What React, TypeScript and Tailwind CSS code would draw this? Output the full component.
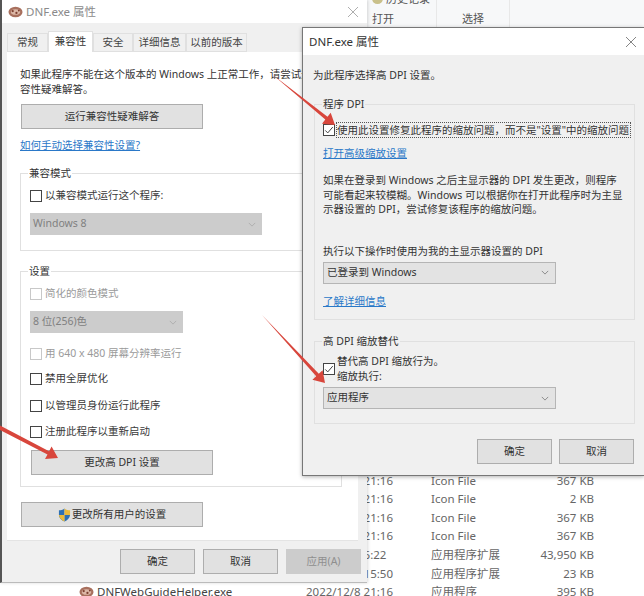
import type { ReactNode } from 'react'

const FONT = "font-['Noto_Sans','Noto_Sans_CJK_SC',sans-serif]"

const fileRows = [
  { date: '2022/12/8 21:16', type: 'Icon File', size: '367 KB' },
  { date: '2022/12/8 21:16', type: 'Icon File', size: '2 KB' },
  { date: '2022/12/8 21:16', type: 'Icon File', size: '367 KB' },
  { date: '2022/12/8 21:16', type: 'Icon File', size: '367 KB' },
  { date: '2022/12/8 6:22', type: '应用程序扩展', size: '43,950 KB' },
  { date: '2022/12/8 15:50', type: '应用程序扩展', size: '23 KB' },
  { date: '2022/12/8 21:16', type: '应用程序', size: '395 KB', name: 'DNFWebGuideHelper.exe' },
]

function Btn({ className, children }: { className: string; children: ReactNode }) {
  return (
    <div className={`flex items-center justify-center h-[25px] bg-[#e1e1e1] border border-[#adadad] text-[#333] ${className}`}>
      {children}
    </div>
  )
}

function Check({ checked, disabled, className = '' }: { checked?: boolean; disabled?: boolean; className?: string }) {
  return (
    <span className={`flex-none w-[12px] h-[12px] border bg-white flex items-center justify-center ${disabled ? 'border-[#c8c8c8]' : 'border-[#444]'} ${className}`}>
      {checked && (
        <svg viewBox="0 0 12 12" className="w-[10px] h-[10px]" fill="none" stroke="#444" strokeWidth="1.2">
          <path d="M1.5 6.5 L4.5 9.5 L10.5 2.5" />
        </svg>
      )}
    </span>
  )
}

function CheckRow({ label, disabled, className = '' }: { label: string; disabled?: boolean; className?: string }) {
  return (
    <div className={`flex items-center gap-[3px] h-[14px] ${disabled ? 'text-[#9a9a9a]' : 'text-[#3a3a3a]'} ${className}`}>
      <Check disabled={disabled} />
      <span>{label}</span>
    </div>
  )
}

function Select({ label, disabled, className }: { label: string; disabled?: boolean; className: string }) {
  return (
    <div className={`flex items-center justify-between h-[22px] pl-[3px] pr-[6px] ${disabled ? 'bg-[#cccccc] text-[#808080]' : 'bg-[#e3e3e3] border border-[#b5b5b5] text-[#333]'} ${className}`}>
      <span>{label}</span>
      <svg viewBox="0 0 10 6" className="w-[8px] h-[5px]" fill="none" stroke={disabled ? '#aaa' : '#777'} strokeWidth="1">
        <path d="M1 1 L5 5 L9 1" />
      </svg>
    </div>
  )
}

function Group({ title, className, bg, children }: { title: string; className: string; bg: string; children: ReactNode }) {
  return (
    <div className={`border border-[#e0e0e0] ${className}`}>
      <div className={`w-fit ml-[7px] -mt-[8px] px-px h-[15px] leading-[15px] text-[#333] ${bg}`}>{title}</div>
      {children}
    </div>
  )
}

function Link({ children, className = '' }: { children: ReactNode; className?: string }) {
  return <div className={`text-[#2a78c8] underline leading-[15px] ${className}`}>{children}</div>
}

function Shield() {
  return (
    <svg viewBox="0 0 14 15" className="w-[13px] h-[14px] mr-px">
      <path d="M7 0.5 C5 2 3 2.5 1 2.5 V7 C1 11 4 13.5 7 14.5 Z" fill="#2c6fb3" />
      <path d="M7 0.5 C9 2 11 2.5 13 2.5 V7.5 H7 Z" fill="#e9b93a" />
      <path d="M7 7.5 H13 C12.6 11 10 13.5 7 14.5 Z" fill="#2c6fb3" />
      <path d="M1 7.5 H7 V14.5 C4 13.5 1.4 11 1 7.5 Z" fill="#e9b93a" />
    </svg>
  )
}

// the round DNF game icon, a few blotches are enough at this size
function GameIcon({ className = '' }: { className?: string }) {
  return (
    <svg viewBox="0 0 16 12" className={`flex-none w-[15px] h-[12px] ${className}`}>
      <ellipse cx="8" cy="6" rx="7.5" ry="5.5" fill="#a8705e" />
      <ellipse cx="8" cy="6" rx="5" ry="3" fill="#dcb7a6" />
      <circle cx="5" cy="5" r="1.2" fill="#7c3f30" />
      <circle cx="9" cy="7" r="1.2" fill="#7c3f30" />
      <circle cx="11.5" cy="4.5" r="1" fill="#7c3f30" />
    </svg>
  )
}

function Explorer() {
  return (
    <div className="absolute inset-0 flex flex-col bg-white">
      <div className="h-[28px] flex-none bg-[#f7f8f9] flex pl-[368px] text-[#555] text-[11px]">
        <div className="w-[69px] border-r border-[#e8e8e8] flex flex-col pl-[4px] justify-end pb-[2px] overflow-hidden">
          <div className="flex items-center gap-[3px] leading-[15px] mb-[5px]">
            <span className="w-[11px] h-[11px] rounded-full bg-[#c9c08a]" />
            <span>历史记录</span>
          </div>
          <span className="leading-[15px]">打开</span>
        </div>
        <div className="w-[73px] border-r border-[#e8e8e8] flex flex-col justify-end items-center pb-[2px]">
          <span className="leading-[15px]">选择</span>
        </div>
      </div>
      <div className="mt-[443px] flex flex-col text-[11.5px] text-[#666]">
        {fileRows.map((row, i) => (
          <div key={i} className="flex h-[18.6px] items-center leading-none">
            <div className="w-[306px] pl-[79px] flex items-center gap-[3px] text-[#444]">
              {row.name && (
                <>
                  <GameIcon />
                  <span>{row.name}</span>
                </>
              )}
            </div>
            <div className="w-[125px]">{row.date}</div>
            <div className="w-[100px]">{row.type}</div>
            <div className="w-[63px] text-right">{row.size}</div>
          </div>
        ))}
      </div>
    </div>
  )
}

function PropsWindow() {
  return (
    <div className="absolute left-0 top-0 w-[367px] h-[583px] bg-[#f0f0f0] border-l-2 border-b border-[#555] border-b-[#bbb] shadow-[1px_0_3px_rgba(0,0,0,0.15)] flex flex-col">
      <div className="h-[23px] flex-none bg-white flex items-center pl-[6px] pr-[9px] text-[#8a8a8a] text-[11.5px]">
        <GameIcon className="mr-[3px]" />
        <span className="flex-1">DNF.exe 属性</span>
        <svg viewBox="0 0 10 10" className="w-[10px] h-[10px]" stroke="#999" strokeWidth="0.8">
          <path d="M0 0 L10 10 M10 0 L0 10" />
        </svg>
      </div>
      <div className="flex h-[29px] flex-none items-end pl-[5px] text-[#444]">
        <div className="w-[41px] h-[19px] flex items-center justify-center bg-[#f0f0f0] border border-[#e0e0e0]">常规</div>
        <div className="w-[45px] h-[21px] flex items-center justify-center bg-white border-x border-t border-[#e0e0e0] text-[#333]">兼容性</div>
        <div className="w-[40px] h-[19px] flex items-center justify-center bg-[#f0f0f0] border border-[#e0e0e0]">安全</div>
        <div className="w-[53px] h-[19px] flex items-center justify-center bg-[#f0f0f0] border border-[#e0e0e0]">详细信息</div>
        <div className="w-[61px] h-[19px] flex items-center justify-center bg-[#f0f0f0] border border-[#e0e0e0]">以前的版本</div>
      </div>
      <div className="ml-[5px] w-[351px] h-[489px] flex-none bg-white border-b border-[#e4e4e4] pt-[15px] pl-[13px]">
        <p className="leading-[15px] text-[#333] whitespace-nowrap">如果此程序不能在这个版本的 Windows 上正常工作，请尝试运行兼</p>
        <p className="leading-[15px] text-[#333]">容性疑难解答。</p>
        <Btn className="w-[182px] mt-[7px] ml-px">运行兼容性疑难解答</Btn>
        <Link className="mt-[9px]">如何手动选择兼容性设置?</Link>
        <Group title="兼容模式" bg="bg-white" className="mt-[20px] w-[322px] h-[78px]">
          <div className="pl-[9px]">
            <CheckRow label="以兼容模式运行这个程序:" className="mt-[8px]" />
            <Select disabled label="Windows 8" className="w-[232px] mt-[10px]" />
          </div>
        </Group>
        <Group title="设置" bg="bg-white" className="mt-[20px] w-[322px] h-[216px]">
          <div className="pl-[9px]">
            <CheckRow disabled label="简化的颜色模式" className="mt-[8px]" />
            <Select disabled label="8 位(256)色" className="w-[153px] mt-[10px]" />
            <CheckRow disabled label="用 640 x 480 屏幕分辨率运行" className="mt-[14px]" />
            <CheckRow label="禁用全屏优化" className="mt-[11px]" />
            <CheckRow label="以管理员身份运行此程序" className="mt-[13px]" />
            <CheckRow label="注册此程序以重新启动" className="mt-[12px]" />
            <Btn className="w-[182px] mt-[11px] ml-px">更改高 DPI 设置</Btn>
          </div>
        </Group>
        <Btn className="w-[182px] mt-[15px] ml-px">
          <Shield />
          更改所有用户的设置
        </Btn>
      </div>
      <div className="flex pt-[8px] pl-[118px] gap-[8px]">
        <Btn className="w-[75px]">确定</Btn>
        <Btn className="w-[75px]">取消</Btn>
        <div className="w-[75px] h-[25px] flex items-center justify-center bg-[#cccccc] text-[#8f8f8f]">应用(A)</div>
      </div>
    </div>
  )
}

function DpiWindow() {
  return (
    <div className="absolute left-[302px] top-[27px] w-[342px] h-[449px] bg-[#f0f0f0] border border-[#777] border-r-0 shadow-[0_1px_4px_rgba(0,0,0,0.3)] flex flex-col">
      <div className="h-[27px] flex-none bg-white flex items-center pl-[6px] pr-[8px] text-[#333] text-[11.5px]">
        <span className="flex-1">DNF.exe 属性</span>
        <svg viewBox="0 0 10 10" className="w-[10px] h-[10px]" stroke="#666" strokeWidth="0.8">
          <path d="M0 0 L10 10 M10 0 L0 10" />
        </svg>
      </div>
      <div className="pl-[10px] pt-[13px]">
        <p className="leading-[15px] text-[#333]">为此程序选择高 DPI 设置。</p>
        <Group title="程序 DPI" bg="bg-[#f0f0f0]" className="mt-[21px] ml-px w-[321px] h-[216px]">
          <div className="pl-[8px] text-[#333]">
            <div className="flex items-center gap-px mt-[10px]">
              <Check checked />
              <span className="border border-dotted border-[#555] h-[16px] leading-[14px] whitespace-nowrap pr-px">使用此设置修复此程序的缩放问题，而不是"设置"中的缩放问题</span>
            </div>
            <Link className="mt-[8px]">打开高级缩放设置</Link>
            <p className="mt-[12px] leading-[14.5px] whitespace-nowrap">
              如果在登录到 Windows 之后主显示器的 DPI 发生更改，则程序
              <br />
              可能看起来较模糊。Windows 可以根据你在打开此程序时为主显
              <br />
              示器设置的 DPI，尝试修复该程序的缩放问题。
            </p>
            <p className="mt-[27px] leading-[15px]">执行以下操作时使用为我的主显示器设置的 DPI</p>
            <Select label="已登录到 Windows" className="w-[233px] mt-[3px]" />
            <Link className="mt-[10px]">了解详细信息</Link>
          </div>
        </Group>
        <Group title="高 DPI 缩放替代" bg="bg-[#f0f0f0]" className="mt-[21px] ml-px w-[321px] h-[83px]">
          <div className="pl-[8px] text-[#333]">
            <div className="flex items-center gap-[2px] mt-[5px]">
              <Check checked />
              <div className="leading-[15px]">
                <div>替代高 DPI 缩放行为。</div>
                <div>缩放执行:</div>
              </div>
            </div>
            <Select label="应用程序" className="w-[233px] mt-[3px]" />
          </div>
        </Group>
        <div className="flex justify-end gap-[7px] pr-[10px] mt-[15px]">
          <Btn className="w-[75px]">确定</Btn>
          <Btn className="w-[75px]">取消</Btn>
        </div>
      </div>
    </div>
  )
}

function Arrows() {
  const arrow = '#d8463c'
  return (
    <svg className="absolute inset-0 w-[644px] h-[596px] pointer-events-none" viewBox="0 0 644 596">
      <path d="M273 75 L327.5 116.8 L330.7 112.7 L335 125 L322 123.7 L325.3 119.6 Z" fill={arrow} />
      <path d="M262 315 L318.8 373.8 L322.6 370.2 L325 383 L312.4 379.8 L316.2 376.2 Z" fill={arrow} />
      <path d="M0 425.5 L49.1 451.2 L51.6 446.6 L58 458 L45 459 L47.5 454.4 L0 430 Z" fill={arrow} />
    </svg>
  )
}

export default function App() {
  return (
    <div className={`relative w-[644px] h-[596px] overflow-hidden bg-white text-[10.5px] ${FONT}`}>
      <Explorer />
      <PropsWindow />
      <DpiWindow />
      <Arrows />
    </div>
  )
}
